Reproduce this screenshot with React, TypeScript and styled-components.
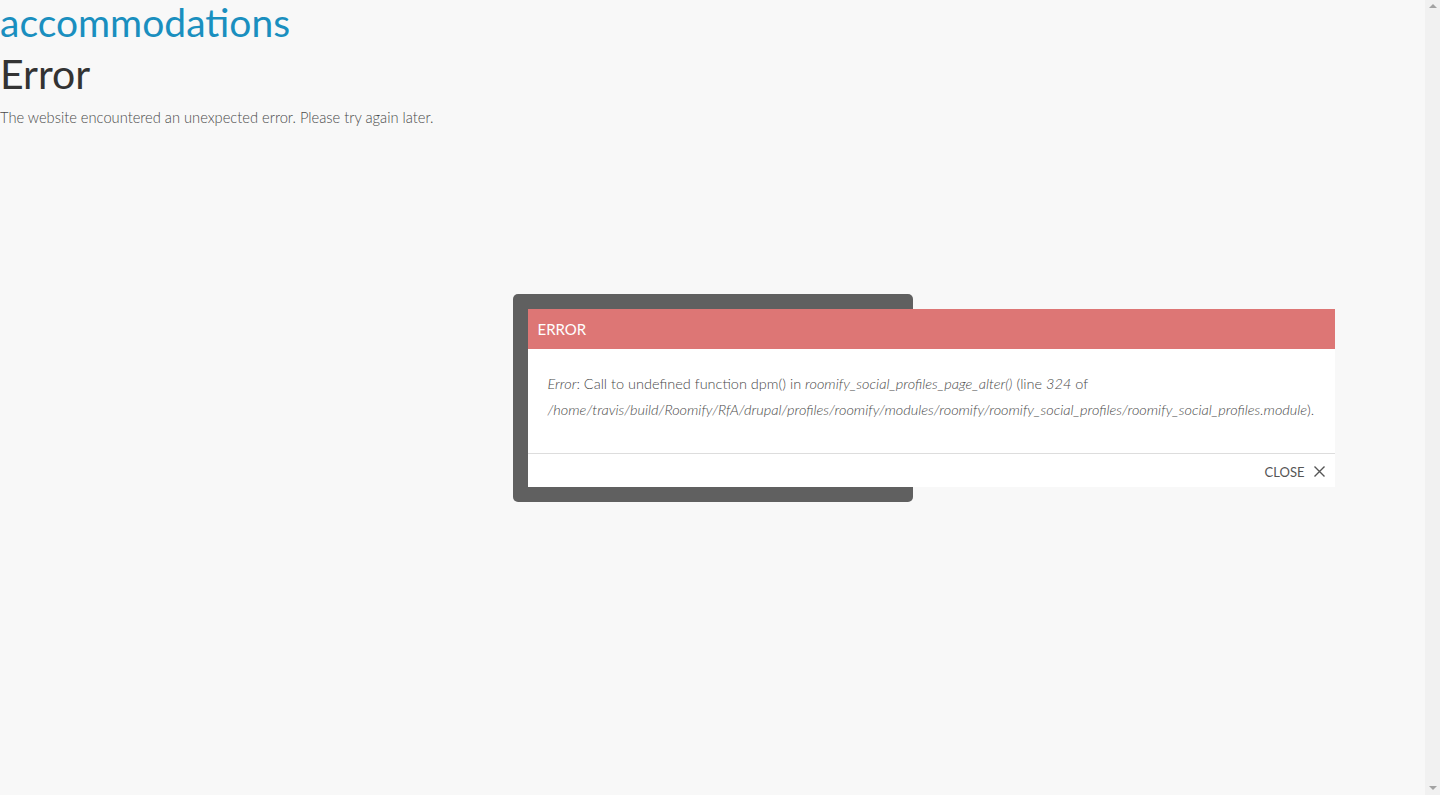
import React from "react";
import styled, { createGlobalStyle } from "styled-components";

const Global = createGlobalStyle`
  body {
    margin: 0;
    background: #f8f8f8;
    font-family: Lato, "Open Sans", sans-serif;
    font-weight: 300;
    color: #444;
  }
`;

const Page = styled.main`
  display: flex;
  flex-direction: column;
  margin-right: 15px;
`;

const SiteName = styled.a`
  font-size: 39px;
  font-weight: 400;
  line-height: 44px;
  color: #1a8fbf;
  text-decoration: none;
`;

const Title = styled.h1`
  margin: 6px 0 0;
  font-size: 41px;
  font-weight: 400;
  line-height: 48px;
  color: #333;
`;

const Message = styled.p`
  margin: 9px 0 0;
  font-size: 14.7px;
  line-height: 20px;
  color: #4a4a4a;
`;

const ScrollTrack = styled.div`
  position: fixed;
  top: 0;
  right: 0;
  bottom: 0;
  width: 15px;
  background: #f1f1f1;
  display: flex;
  flex-direction: column;
  justify-content: space-between;
  align-items: center;
  padding: 4px 0 5px;
  box-sizing: border-box;
`;

const Arrow = styled.span<{ $down?: boolean }>`
  width: 0;
  height: 0;
  border-left: 4px solid transparent;
  border-right: 4px solid transparent;
  ${(p) => (p.$down ? "border-top: 4px solid #a3a3a3;" : "border-bottom: 4px solid #a3a3a3;")}
`;

const Frame = styled.div`
  position: fixed;
  left: calc(50% - 7.5px);
  top: 50%;
  transform: translate(-50%, -50%);
  width: 400px;
  height: 208px;
  box-sizing: border-box;
  padding: 15px;
  background: #606060;
  border-radius: 5px;
`;

const Dialog = styled.section`
  width: 807px;
  background: #fff;
  display: flex;
  flex-direction: column;
`;

const Header = styled.header`
  height: 40px;
  display: flex;
  align-items: center;
  padding: 0 10px;
  background: #dd7675;
  color: #fff;
  font-size: 15px;
  font-weight: 400;
`;

const Body = styled.div`
  padding: 22px 20px 30px;
  font-size: 14.5px;
  line-height: 26px;
  color: #4a4a4a;
  border-bottom: 1px solid #ddd;
`;

const Footer = styled.footer`
  height: 33px;
  box-sizing: border-box;
  padding: 3px 10px 0;
  display: flex;
  justify-content: flex-end;
  align-items: center;
`;

const CloseButton = styled.button`
  display: flex;
  align-items: center;
  gap: 9px;
  border: 0;
  background: none;
  padding: 0;
  font-family: Lato, sans-serif;
  font-weight: 400;
  font-size: 13px;
  color: #555;
  text-transform: uppercase;
  cursor: pointer;
`;

export default function App() {
  return (
    <>
      <Global />
      <Page>
        <SiteName href="#">accommodations</SiteName>
        <Title>Error</Title>
        <Message>The website encountered an unexpected error. Please try again later.</Message>
      </Page>
      <ScrollTrack aria-hidden="true">
        <Arrow />
        <Arrow $down />
      </ScrollTrack>
      <Frame>
        <Dialog>
          <Header>ERROR</Header>
          <Body>
            <em>Error</em>: Call to undefined function dpm() in <em>roomify_social_profiles_page_alter()</em> (line <em>324</em> of{" "}
            <em>/home/travis/build/Roomify/RfA/drupal/profiles/roomify/modules/roomify/roomify_social_profiles/roomify_social_profiles.module</em>).
          </Body>
          <Footer>
            <CloseButton>
              Close
              <svg width="11" height="11" viewBox="0 0 11 11" stroke="#555" strokeWidth="1.4" fill="none">
                <path d="M0.5 0.5 L10.5 10.5 M10.5 0.5 L0.5 10.5" />
              </svg>
            </CloseButton>
          </Footer>
        </Dialog>
      </Frame>
    </>
  );
}
